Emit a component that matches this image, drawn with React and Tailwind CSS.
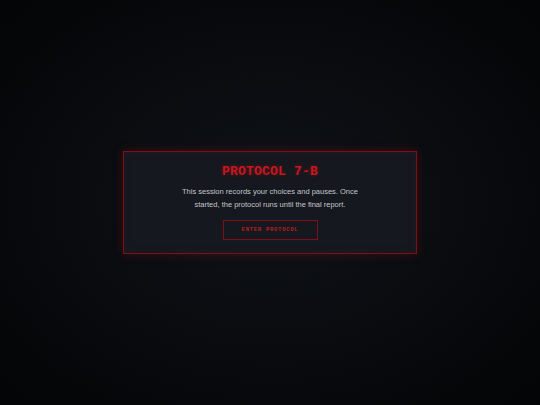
export default function App() {
  return (
    <div className="min-h-screen w-full flex items-center justify-center bg-[radial-gradient(ellipse_at_center,#101318_0%,#0a0c10_45%,#030405_100%)]">
      <div className="w-[294px] border border-[#7e1016] bg-[#15181e] shadow-[0_0_10px_rgba(180,20,30,0.28),inset_0_0_10px_rgba(150,15,25,0.1)] pt-[12px] pb-[13px] flex flex-col items-center">
        <h1 className="font-['Liberation_Mono',monospace] font-bold text-[13px] leading-[16px] text-[#c8161f] tracking-[0.2px] [text-shadow:0_0_4px_rgba(220,20,30,0.4)]">
          PROTOCOL 7-B
        </h1>

        <p className="mt-[5px] w-[180px] text-center font-['Liberation_Sans',Arial,sans-serif] text-[7.5px] leading-[13px] text-[#c4c6cb]">
          This session records your choices and pauses. Once started, the protocol runs until the final report.
        </p>

        <button
          type="button"
          className="mt-[9px] w-[95px] h-[20px] border border-[#7e1016] bg-transparent flex items-center justify-center font-['Liberation_Mono',monospace] font-bold text-[5.6px] tracking-[0.7px] text-[#b81e28]"
        >
          ENTER PROTOCOL
        </button>
      </div>
    </div>
  );
}
